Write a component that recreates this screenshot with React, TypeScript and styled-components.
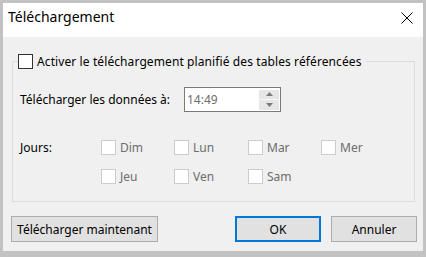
import React from "react";
import styled, { createGlobalStyle } from "styled-components";

const GlobalStyle = createGlobalStyle`
  html, body { margin: 0; padding: 0; background: #c2c2c2; }
  body { font-family: "Noto Sans", "Open Sans", sans-serif; font-size: 12px; color: #000; }
  * { box-sizing: border-box; }
`;

const Window = styled.div`
  width: 426px;
  height: 257px;
  display: flex;
  flex-direction: column;
  border-style: solid;
  border-color: #c2c2c2;
  border-width: 3px 3px 6px 3px;
  background: #f0f0f0;
`;

const TitleBar = styled.div`
  height: 34px;
  flex: none;
  display: flex;
  align-items: flex-start;
  justify-content: space-between;
  background: #ffffff;
  padding: 4px 10px 0 5px;
`;

const Title = styled.div`
  font-size: 14px;
  line-height: 19px;
  color: #000;
`;

const CloseIcon = styled.svg`
  display: block;
  width: 12px;
  height: 12px;
  margin-top: 5px;
`;

const Body = styled.div`
  flex: 1;
  display: flex;
  flex-direction: column;
  padding: 17px 6px 0 8px;
`;

const Group = styled.fieldset`
  margin: 0 2px 0 1px;
  padding: 0 0 17px 5px;
  border: 1px solid #dcdcdc;
  min-width: 0;
`;

const Legend = styled.legend`
  padding: 0 4px 0 0;
  display: flex;
  align-items: center;
  gap: 4px;
  height: 15px;
  line-height: 15px;
`;

const LegendText = styled.span`
  letter-spacing: 0.1px;
`;

const Box = styled.span<{ $disabled?: boolean }>`
  display: block;
  flex: none;
  width: 15px;
  height: 15px;
  background: #ffffff;
  border: 1px solid ${(p) => (p.$disabled ? "#cccccc" : "#333333")};
`;

const GroupContent = styled.div`
  display: flex;
  flex-direction: column;
  gap: 28px;
  padding: 18px 0 0 2px;
`;

const TopRow = styled.div`
  display: flex;
  align-items: center;
`;

const DaysRow = styled.div`
  display: flex;
  align-items: flex-start;
`;

const Label = styled.span<{ $width: number }>`
  flex: none;
  width: ${(p) => p.$width}px;
  line-height: 15px;
  white-space: nowrap;
`;

const TimeInput = styled.div`
  width: 97px;
  height: 25px;
  display: flex;
  align-items: center;
  justify-content: space-between;
  background: #ffffff;
  border: 1px solid #7a7a7a;
  padding: 0 1px 0 2px;
`;

const TimeText = styled.span`
  color: #6d6d6d;
  line-height: 16px;
`;

const Spinner = styled.div`
  width: 20px;
  height: 20px;
  display: flex;
  flex-direction: column;
  gap: 1px;
  background: #f7f7f7;
`;

const SpinHalf = styled.div`
  flex: 1;
  display: flex;
  align-items: center;
  justify-content: center;
  background: #e6e6e6;
`;

const Arrow = styled.svg`
  display: block;
  width: 7px;
  height: 4px;
`;

const DayGrid = styled.div`
  display: grid;
  grid-template-columns: 73px 74px 73px 73px;
  row-gap: 14px;
`;

const Day = styled.label`
  display: flex;
  align-items: center;
  gap: 4px;
  height: 15px;
  color: #6d6d6d;
  line-height: 15px;
`;

const ButtonBar = styled.div`
  display: flex;
  align-items: center;
  padding-top: 14px;
`;

const Button = styled.button<{ $width: number; $default?: boolean }>`
  width: ${(p) => p.$width}px;
  height: 26px;
  margin: 0;
  padding: 0;
  font-family: inherit;
  font-size: 12px;
  color: #000;
  background: #e1e1e1;
  border: ${(p) => (p.$default ? "2px solid #0078d7" : "1px solid #adadad")};
`;

const Spacer = styled.div`
  flex: 1;
`;

const ButtonGap = styled.div`
  width: 10px;
`;

const days = ["Dim", "Lun", "Mar", "Mer", "Jeu", "Ven", "Sam"];

export default function App() {
  return (
    <>
      <GlobalStyle />
      <Window>
        <TitleBar>
          <Title>Téléchargement</Title>
          <CloseIcon viewBox="0 0 12 12">
            <path d="M0.5 0.5 L11.5 11.5 M11.5 0.5 L0.5 11.5" stroke="#000" strokeWidth="1" fill="none" />
          </CloseIcon>
        </TitleBar>
        <Body>
          <Group>
            <Legend>
              <Box />
              <LegendText>Activer le téléchargement planifié des tables référencées</LegendText>
            </Legend>
            <GroupContent>
              <TopRow>
                <Label $width={164}>Télécharger les données à:</Label>
                <TimeInput>
                  <TimeText>14:49</TimeText>
                  <Spinner>
                    <SpinHalf>
                      <Arrow viewBox="0 0 7 4">
                        <path d="M3.5 0 L7 4 L0 4 Z" fill="#7a7a7a" />
                      </Arrow>
                    </SpinHalf>
                    <SpinHalf>
                      <Arrow viewBox="0 0 7 4">
                        <path d="M0 0 L7 0 L3.5 4 Z" fill="#7a7a7a" />
                      </Arrow>
                    </SpinHalf>
                  </Spinner>
                </TimeInput>
              </TopRow>
              <DaysRow>
                <Label $width={81}>Jours:</Label>
                <DayGrid>
                  {days.map((d) => (
                    <Day key={d}>
                      <Box $disabled />
                      <span>{d}</span>
                    </Day>
                  ))}
                </DayGrid>
              </DaysRow>
            </GroupContent>
          </Group>
          <ButtonBar>
            <Button $width={147}>Télécharger maintenant</Button>
            <Spacer />
            <Button $width={86} $default>OK</Button>
            <ButtonGap />
            <Button $width={86}>Annuler</Button>
          </ButtonBar>
        </Body>
      </Window>
    </>
  );
}
